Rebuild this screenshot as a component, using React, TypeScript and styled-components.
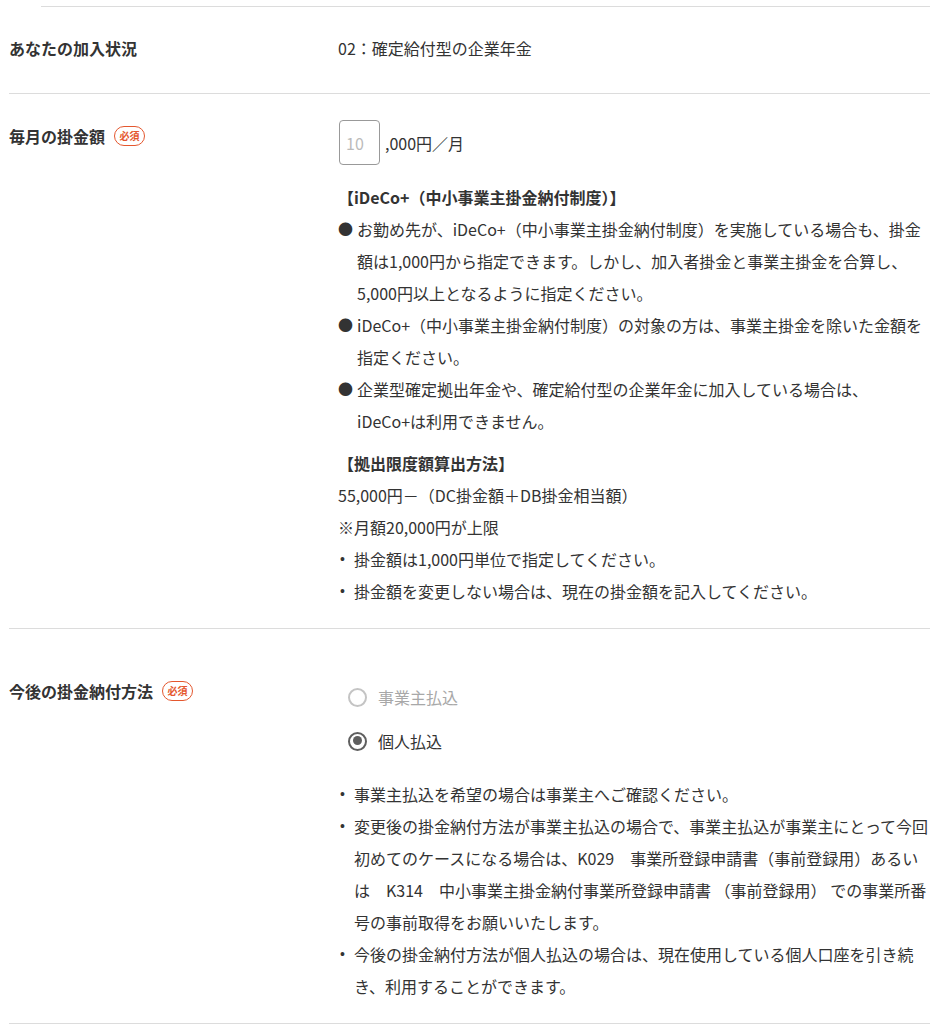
import React from "react";
import styled, { createGlobalStyle } from "styled-components";

const GlobalStyle = createGlobalStyle`
  body {
    margin: 0;
    background: #fff;
    color: #333;
    font-family: "Noto Sans CJK JP", "Noto Sans", sans-serif;
    font-size: 16px;
  }
`;

const Page = styled.div`
  width: 921px;
  margin-left: 9px;
  padding-top: 6px;
`;

const TopRule = styled.div`
  margin-left: 32px;
  border-top: 1px solid #dcdcdc;
`;

const Row = styled.div<{ $top: number; $bottom: number }>`
  display: grid;
  grid-template-columns: 329px 1fr;
  padding: ${(p) => p.$top}px 0 ${(p) => p.$bottom}px;
  border-bottom: 1px solid #dcdcdc;
`;

const Label = styled.div<{ $offset?: number }>`
  display: flex;
  align-items: center;
  gap: 9px;
  height: 24px;
  margin-top: ${(p) => p.$offset || 0}px;
  font-weight: bold;
  font-size: 16px;
  line-height: 24px;
`;

const Required = styled.span`
  display: inline-flex;
  align-items: center;
  justify-content: center;
  box-sizing: border-box;
  width: 31px;
  height: 20px;
  border: 1.5px solid #e4572e;
  border-radius: 10px;
  color: #e4572e;
  font-size: 10px;
  font-weight: bold;
  line-height: 1;
`;

const Value = styled.div`
  line-height: 24px;
  font-size: 16px;
`;

const AmountRow = styled.div`
  display: flex;
  align-items: center;
  gap: 5px;
  padding-left: 1px;
`;

const AmountInput = styled.input`
  box-sizing: border-box;
  width: 41px;
  height: 45px;
  border: 1px solid #999;
  border-radius: 4px;
  padding: 0 0 0 6px;
  font-family: inherit;
  font-size: 16px;
  color: #333;
  outline: none;
  &::placeholder {
    color: #bbb;
  }
`;

const Block = styled.div<{ $gap?: number }>`
  margin-top: ${(p) => p.$gap || 0}px;
  line-height: 32px;
`;

const Heading = styled.div`
  font-weight: bold;
  line-height: 32px;
`;

const Plain = styled.div`
  line-height: 32px;
`;

const Item = styled.div<{ $mark: number }>`
  display: grid;
  grid-template-columns: ${(p) => p.$mark}px 1fr;
  line-height: 32px;
`;

const BigDot = styled.span`
  font-size: 15px;
  color: #333;
  line-height: 32px;
`;

const SmallDot = styled.span`
  font-family: "Liberation Sans", sans-serif;
  padding-left: 2px;
  font-size: 14px;
  line-height: 32px;
`;

const RadioGroup = styled.div`
  display: flex;
  flex-direction: column;
  gap: 20px;
  padding: 10px 0 0 10px;
`;

const RadioItem = styled.label<{ $checked?: boolean }>`
  display: flex;
  align-items: center;
  gap: 11px;
  height: 24px;
  color: ${(p) => (p.$checked ? "#333" : "#a8a8a8")};
`;

const RadioMark = styled.span<{ $checked?: boolean }>`
  position: relative;
  box-sizing: border-box;
  width: 19px;
  height: 19px;
  border-radius: 50%;
  border: 2.5px solid ${(p) => (p.$checked ? "#5f5f5f" : "#c4c4c4")};
  &::after {
    content: "";
    display: ${(p) => (p.$checked ? "block" : "none")};
    position: absolute;
    left: 2.5px;
    top: 2.5px;
    width: 9px;
    height: 9px;
    border-radius: 50%;
    background: #5f5f5f;
  }
`;

const Notes = styled.div`
  margin-top: 25px;
`;

const Dot = ({ children }: { children: React.ReactNode }) => (
  <Item $mark={19}>
    <BigDot>●</BigDot>
    <span>{children}</span>
  </Item>
);

const Bullet = ({ children }: { children: React.ReactNode }) => (
  <Item $mark={16}>
    <SmallDot>•</SmallDot>
    <span>{children}</span>
  </Item>
);

export default function App() {
  return (
    <>
      <GlobalStyle />
      <Page>
        <TopRule />
        <Row $top={29} $bottom={33}>
          <Label>あなたの加入状況</Label>
          <Value>02：確定給付型の企業年金</Value>
        </Row>

        <Row $top={26} $bottom={21}>
          <Label $offset={4}>
            毎月の掛金額<Required>必須</Required>
          </Label>
          <Value>
            <AmountRow>
              <AmountInput placeholder="10" />
              <span>,000円／月</span>
            </AmountRow>
            <Block $gap={16}>
              <Heading>【iDeCo+（中小事業主掛金納付制度）】</Heading>
              <Dot>
                お勤め先が、iDeCo+（中小事業主掛金納付制度）を実施している場合も、掛金
                <br />
                額は1,000円から指定できます。しかし、加入者掛金と事業主掛金を合算し、
                <br />
                5,000円以上となるように指定ください。
              </Dot>
              <Dot>
                iDeCo+（中小事業主掛金納付制度）の対象の方は、事業主掛金を除いた金額を
                <br />
                指定ください。
              </Dot>
              <Dot>
                企業型確定拠出年金や、確定給付型の企業年金に加入している場合は、
                <br />
                iDeCo+は利用できません。
              </Dot>
            </Block>
            <Block $gap={10}>
              <Heading>【拠出限度額算出方法】</Heading>
              <Plain>55,000円－（DC掛金額＋DB掛金相当額）</Plain>
              <Plain>※月額20,000円が上限</Plain>
              <Bullet>掛金額は1,000円単位で指定してください。</Bullet>
              <Bullet>掛金額を変更しない場合は、現在の掛金額を記入してください。</Bullet>
            </Block>
          </Value>
        </Row>

        <Row $top={46} $bottom={21}>
          <Label $offset={4}>
            今後の掛金納付方法<Required>必須</Required>
          </Label>
          <Value>
            <RadioGroup>
              <RadioItem>
                <RadioMark />
                事業主払込
              </RadioItem>
              <RadioItem $checked>
                <RadioMark $checked />
                個人払込
              </RadioItem>
            </RadioGroup>
            <Notes>
              <Bullet>事業主払込を希望の場合は事業主へご確認ください。</Bullet>
              <Bullet>
                変更後の掛金納付方法が事業主払込の場合で、事業主払込が事業主にとって今回
                <br />
                初めてのケースになる場合は、K029　事業所登録申請書（事前登録用）あるい
                <br />
                は　K314　中小事業主掛金納付事業所登録申請書 （事前登録用） での事業所番
                <br />
                号の事前取得をお願いいたします。
              </Bullet>
              <Bullet>
                今後の掛金納付方法が個人払込の場合は、現在使用している個人口座を引き続
                <br />
                き、利用することができます。
              </Bullet>
            </Notes>
          </Value>
        </Row>
      </Page>
    </>
  );
}
